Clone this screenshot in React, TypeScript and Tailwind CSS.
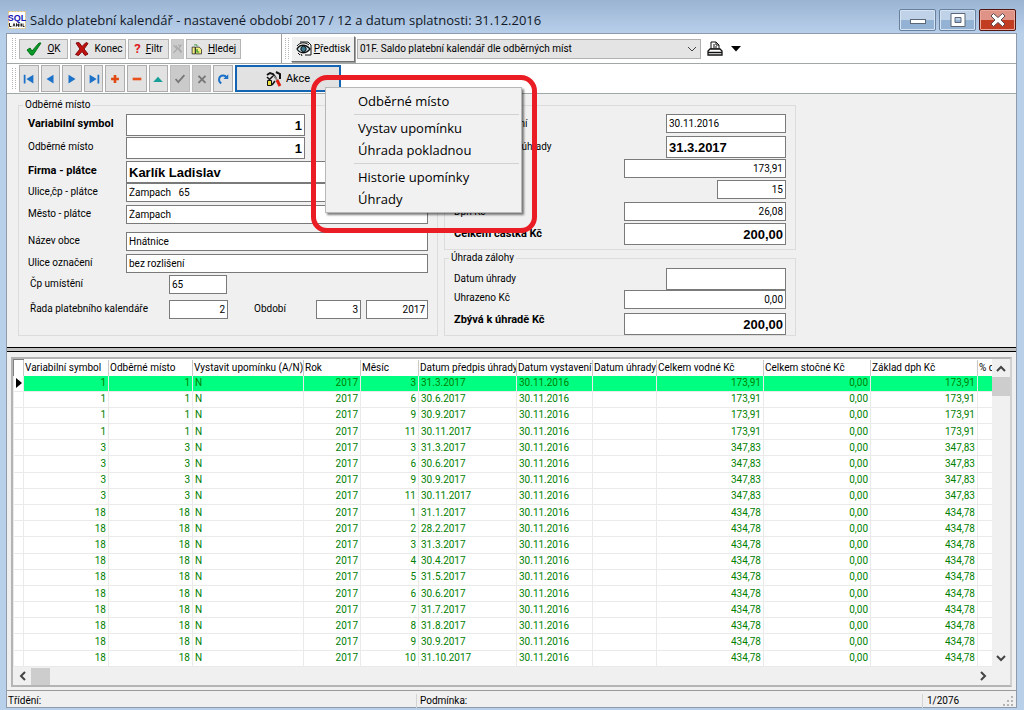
import { useState } from 'react';
import type { ReactNode } from 'react';
import clsx from 'clsx';

/**
 * Saldo platební kalendář
 * Detail form on top, payment schedule grid below
 */

interface Payment {
  id: number;
  month: number;
  due: string;
  amount: string;
}

const payments: Payment[] = [
  { id: 1, month: 3, due: '31.3.2017', amount: '173,91' },
  { id: 1, month: 6, due: '30.6.2017', amount: '173,91' },
  { id: 1, month: 9, due: '30.9.2017', amount: '173,91' },
  { id: 1, month: 11, due: '30.11.2017', amount: '173,91' },
  { id: 3, month: 3, due: '31.3.2017', amount: '347,83' },
  { id: 3, month: 6, due: '30.6.2017', amount: '347,83' },
  { id: 3, month: 9, due: '30.9.2017', amount: '347,83' },
  { id: 3, month: 11, due: '30.11.2017', amount: '347,83' },
  { id: 18, month: 1, due: '31.1.2017', amount: '434,78' },
  { id: 18, month: 2, due: '28.2.2017', amount: '434,78' },
  { id: 18, month: 3, due: '31.3.2017', amount: '434,78' },
  { id: 18, month: 4, due: '30.4.2017', amount: '434,78' },
  { id: 18, month: 5, due: '31.5.2017', amount: '434,78' },
  { id: 18, month: 6, due: '30.6.2017', amount: '434,78' },
  { id: 18, month: 7, due: '31.7.2017', amount: '434,78' },
  { id: 18, month: 8, due: '31.8.2017', amount: '434,78' },
  { id: 18, month: 9, due: '30.9.2017', amount: '434,78' },
  { id: 18, month: 10, due: '31.10.2017', amount: '434,78' },
];

const columns = [
  { label: 'Variabilní symbol', width: 'w-[85px]' },
  { label: 'Odběrné místo', width: 'w-[84px]' },
  { label: 'Vystavit upomínku (A/N)', width: 'w-[111px]' },
  { label: 'Rok', width: 'w-[57px]' },
  { label: 'Měsíc', width: 'w-[58px]' },
  { label: 'Datum předpis úhrady', width: 'w-[98px]' },
  { label: 'Datum vystavení', width: 'w-[76px]' },
  { label: 'Datum úhrady', width: 'w-[64px]' },
  { label: 'Celkem vodné Kč', width: 'w-[107px]' },
  { label: 'Celkem stočné Kč', width: 'w-[107px]' },
  { label: 'Základ dph Kč', width: 'w-[107px]' },
  { label: '% dph', width: '' },
];

function Icon({ size = 'size-4', children }: { size?: string; children: ReactNode }) {
  return (
    <svg viewBox="0 0 16 16" className={clsx(size, 'shrink-0')} fill="none" aria-hidden="true">
      {children}
    </svg>
  );
}

function Grip() {
  return <div className="my-1 w-1 shrink-0 self-stretch border-x border-dotted border-[#b4b4b4]" />;
}

function ToolButton({ width, disabled, label, children }: { width: string; disabled?: boolean; label?: string; children: ReactNode }) {
  return (
    <button
      disabled={disabled}
      aria-label={label}
      className={clsx(
        'flex h-5 items-center justify-center gap-[5px] border whitespace-nowrap',
        width,
        disabled ? 'border-[#c4c4c4] bg-[#cccccc]' : 'border-[#b4b4b4] bg-[#e4e4e4]',
      )}
    >
      {children}
    </button>
  );
}

const navButtons = [
  { label: 'První', icon: <path d="M2 3h2v10H2zM13 3v10L5 8z" fill="#1c72c8" /> },
  { label: 'Předchozí', icon: <path d="M12 3v10L4 8z" fill="#1c72c8" /> },
  { label: 'Další', icon: <path d="M4 3v10l8-5z" fill="#1c72c8" /> },
  { label: 'Poslední', icon: <path d="M3 3v10l8-5zM12 3h2v10h-2z" fill="#1c72c8" /> },
  { label: 'Přidat', icon: <path d="M6.500 3.500h3v3h3v3h-3v3h-3v-3h-3v-3h3z" fill="#e04a12" /> },
  { label: 'Odebrat', icon: <path d="M3 6.500h10v3H3z" fill="#e8501c" /> },
  { label: 'Upravit', icon: <path d="M2.500 11.500h11L8 5.500z" fill="#18a098" /> },
  { label: 'Uložit', off: true, icon: <path d="M3 8l3 3.500 7-8" stroke="#777" strokeWidth="2" /> },
  { label: 'Zrušit', off: true, icon: <path d="M4 4.500l8 8M12 4.500l-8 8" stroke="#777" strokeWidth="2.200" /> },
  { label: 'Obnovit', icon: <><path d="M6 13C1.500 10 3.500 4 8 4c2 0 3.500 1 4 3" stroke="#1c72c8" strokeWidth="2.200" /><path d="M8.500 8H14V2.500z" fill="#1c72c8" /></> },
];

interface BoxProps {
  id: string;
  value: string;
  width: string;
  right?: boolean;
  bigText?: boolean;
}

interface FieldProps extends BoxProps {
  label: string;
  labelWidth?: string;
  bold?: boolean;
  tall?: boolean;
  push?: boolean;
  className?: string;
  children?: ReactNode;
}

function Box({ id, value, width, right, bigText }: BoxProps) {
  return (
    <input
      id={id}
      type="text"
      defaultValue={value}
      className={clsx(
        'h-full border border-[#7a7a7a] bg-white px-[2px] outline-none',
        width,
        right && 'text-right',
        bigText && 'font-[Liberation_Sans] text-[13px] font-bold',
      )}
    />
  );
}

// One label + edit box line of the form
function Field({ label, labelWidth = 'w-[98px]', bold, tall, push, className, children, ...box }: FieldProps) {
  return (
    <div className={clsx('flex items-center', tall ? 'h-[22px]' : 'h-[19px]', className)}>
      <label htmlFor={box.id} className={clsx('shrink-0 whitespace-nowrap', !push && 'pb-[2px]', labelWidth, bold && 'text-[11px] font-bold')}>
        {label}
      </label>
      {push && <div className="flex-1" />}
      <Box {...box} />
      {children}
    </div>
  );
}

function ActionMenu() {
  const item = 'block h-[22px] w-full pl-8 text-left whitespace-nowrap';
  return (
    <div role="menu" className="absolute top-[22px] left-[90px] z-20 w-[197px] border border-[#b8b8b8] bg-[#f1f1f1] py-[2px] font-[Open_Sans] text-[13px] shadow-[2px_2px_2px_#00000080]">
      <button role="menuitem" className={item}>Odběrné místo</button>
      <hr className="my-[2px] mr-[2px] ml-7 border-[#d2d2d2]" />
      <button role="menuitem" className={item}>Vystav upomínku</button>
      <button role="menuitem" className={item}>Úhrada pokladnou</button>
      <hr className="my-[2px] mr-[2px] ml-7 border-[#d2d2d2]" />
      <button role="menuitem" className={item}>Historie upomínky</button>
      <button role="menuitem" className={item}>Úhrady</button>
    </div>
  );
}

function TitleBar() {
  return (
    <header className="flex h-[33px] shrink-0 items-center bg-linear-to-b from-[#9ab4d2] to-[#b8cfea] pt-[6px]">
      <svg viewBox="0 0 18 18" className="ml-2 size-[18px] shrink-0" aria-hidden="true">
        <rect x="0.500" y="0.500" width="17" height="17" fill="#fff" stroke="#e8c070" strokeDasharray="2 1" />
        <text x="9" y="9.500" textAnchor="middle" fontSize="9" fontWeight="bold" fontFamily="Liberation Sans" fill="#1414b4">SQL</text>
        <path d="M1.500 12v3.500h2M5 15.500l1-3 1 3M8.500 15.500v-3l2 3v-3M12 12.500v3M13.500 12.500v3M15 12.500v3h1.500" stroke="#222" fill="none" />
      </svg>
      <h1 className="ml-1 flex-1 font-[Open_Sans] text-[13px] whitespace-nowrap text-[#111827]">
        Saldo platební kalendář - nastavené období 2017 / 12 a datum splatnosti: 31.12.2016
      </h1>
      <div className="mr-2 flex gap-[3px]">
        <button aria-label="Minimalizovat" className="flex h-[22px] w-[37px] items-center justify-center rounded-xs border border-[#66809e] bg-linear-to-b from-[#bfd2e8] from-50% to-[#94b3d4] to-50% shadow-[inset_0_0_0_1px_#d5e3f2]">
          <svg viewBox="0 0 16 16" className="size-4"><rect x="0.500" y="7.500" width="15" height="4" fill="#fff" stroke="#5b6676" /></svg>
        </button>
        <button aria-label="Maximalizovat" className="flex h-[22px] w-[37px] items-center justify-center rounded-xs border border-[#66809e] bg-linear-to-b from-[#bfd2e8] from-50% to-[#94b3d4] to-50% shadow-[inset_0_0_0_1px_#d5e3f2]">
          <svg viewBox="0 0 16 16" className="size-4"><path d="M1 1.500h14v13H1zM5 5.500v5h6v-5z" fill="#fff" stroke="#5b6676" fillRule="evenodd" /></svg>
        </button>
        <button aria-label="Zavřít" className="flex h-[22px] w-[37px] items-center justify-center rounded-xs border border-[#521510] bg-linear-to-b from-[#df9386] from-50% to-[#c23c22] to-50% shadow-[inset_0_0_0_1px_#eaa99c]">
          <svg viewBox="0 0 16 16" className="size-4"><path d="M3.500 1.500L8 5.500l4.500-4 2.500 2.500L11 8l4 4-2.500 2.500L8 10.500l-4.500 4L1 12l4-4-4-4z" fill="#fff" stroke="#5c4a52" strokeLinejoin="round" /></svg>
        </button>
      </div>
    </header>
  );
}

export default function App() {
  const [selected, setSelected] = useState(0);

  return (
    <div className="flex h-screen flex-col bg-[#b9d0eb] font-[Roboto] text-[10px] leading-[14px] text-black">
      <TitleBar />

      <main className="mr-[7px] mb-[2px] ml-[6px] flex min-h-0 flex-1 flex-col border border-[#8f9bab] bg-[#f0f0f0]">
        {/* Toolbars */}
        <div className="flex h-[30px] shrink-0 items-center border-b border-[#a0a8a8] bg-white pl-[5px]">
          <Grip />
          <div className="ml-[3px] flex gap-[2px]">
            <ToolButton width="w-[49px]">
              <Icon><path d="M1 9l3-2 2 3 7-8 2 0L7 14H5z" fill="#0a9a28" stroke="#067018" /></Icon>
              <span><u>O</u>K</span>
            </ToolButton>
            <ToolButton width="w-[56px]">
              <Icon><path d="M2 2l3-.500 3 4L12 1.500l2 1L10 8l4 5-3 1.500L8 10.500 4.500 14.500l-3-1L6 8z" fill="#c01010" stroke="#800808" /></Icon>
              Konec
            </ToolButton>
            <ToolButton width="w-[41px]">
              <span className="text-[13px] font-bold text-[#e02020]">?</span>
              <span><u>F</u>iltr</span>
            </ToolButton>
            <ToolButton width="w-[13px]" disabled label="Zrušit filtr">
              <Icon size="size-3"><path d="M2 3l5 5-5 5M8 3h4l-3 4 4 5M5 3l7 10" stroke="#aaa" strokeWidth="1.500" /></Icon>
            </ToolButton>
            <ToolButton width="w-[55px]">
              <Icon size="size-3">
                <path d="M1.500 5.500h4v9h-4zM6 5.500h5l3 3v6H6z" fill="#f4f080" stroke="#222" />
                <path d="M8 8v4h3" stroke="#148a20" strokeWidth="1.500" />
                <path d="M4 2.500h4v2" stroke="#148a20" />
              </Icon>
              <span><u>H</u>ledej</span>
            </ToolButton>
          </div>
          <div className="ml-10 w-px self-stretch bg-[#a0a0a0]" />
          <div className="ml-[3px] flex self-stretch"><Grip /></div>
          <button className="ml-[2px] flex h-[26px] w-[64px] items-center justify-center gap-[2px] border border-t-white border-r-[#707070] border-b-[#707070] border-l-white bg-[#f0f0f0] whitespace-nowrap shadow-[1px_1px_0_#a0a0a0]">
            <Icon>
              <path d="M4 1h8l3 3v10H9" fill="#fff" stroke="#111" />
              <path d="M1 8c3-5 9-5 13 0-4 5-10 5-13 0z" fill="#cfe6f0" stroke="#111" strokeWidth="1.300" />
              <circle cx="7.500" cy="8" r="2.700" fill="#3a7890" stroke="#111" />
              <path d="M1 5c3-4 8-4 12-1M2 12l2 2M5 13l1 2" stroke="#111" />
            </Icon>
            <span><u>P</u>ředtisk</span>
          </button>
          <div className="relative ml-[2px] w-[344px]">
            <select aria-label="Předtisk" className="h-5 w-full appearance-none border border-[#b0b0b0] bg-[#e4e4e4] px-[2px]">
              <option>01F. Saldo platební kalendář dle odběrných míst</option>
            </select>
            <svg viewBox="0 0 10 6" className="pointer-events-none absolute top-[7px] right-1 h-[6px] w-[10px]" fill="none"><path d="M1 1l4 4 4-4" stroke="#444" /></svg>
          </div>
          <button aria-label="Tisk" className="ml-[6px] flex items-center gap-2">
            <Icon>
              <path d="M4 8V1h5l3 3v4z" fill="#fff" stroke="#111" />
              <path d="M6 4h2M6 6h4M9 1v3h3" stroke="#111" />
              <path d="M3 8h10l2 2v4H1v-4z" fill="#fff" stroke="#111" strokeWidth="1.300" />
              <path d="M1 11.500h14" stroke="#111" strokeWidth="1.500" />
            </Icon>
            <svg viewBox="0 0 10 6" className="h-[6px] w-[10px]"><path d="M0 0h10L5 5.500z" fill="#000" /></svg>
          </button>
        </div>

        <div className="flex h-[30px] shrink-0 items-center border-b border-[#a0a8a8] bg-white pl-[5px]">
          <Grip />
          <div className="ml-[3px] grid w-[214px] grid-cols-10 gap-[2px]">
            {navButtons.map((b) => (
              <button
                key={b.label}
                aria-label={b.label}
                disabled={b.off}
                className={clsx('flex h-[27px] items-center justify-center border', b.off ? 'border-[#bcbcbc] bg-[#cacaca]' : 'border-[#adadad] bg-[#e2e2e2]')}
              >
                <Icon size="size-[14px]">{b.icon}</Icon>
              </button>
            ))}
          </div>
          <div className="relative ml-[2px]">
            <button className="flex h-[27px] w-[106px] items-center justify-center gap-1 border-2 border-[#1464b4] bg-[#e2e2e2] text-[11px]">
              <Icon>
                <path d="M1 4l3-2 3 1 3 4" stroke="#111" strokeWidth="2" />
                <path d="M3 9l4-4M1 6l2 2" stroke="#111" strokeWidth="1.500" />
                <path d="M1.500 9.500h4v5h-4z" fill="#e8e040" stroke="#111" />
                <path d="M6 14l3-4" stroke="#111" strokeWidth="1.500" />
                <path d="M10 1l4 2v5" stroke="#111" strokeWidth="2" />
                <path d="M8 5l4 5" stroke="#888" strokeWidth="2" />
                <path d="M11 9l3 6" stroke="#e02010" strokeWidth="3" />
              </Icon>
              Akce
            </button>
            <ActionMenu />
            <div className="pointer-events-none absolute top-[10px] left-[76px] z-30 h-[158px] w-[226px] rounded-[16px] border-[5px] border-[#ea1c24]" />
          </div>
        </div>

        {/* Detail form */}
        <div className="flex shrink-0 items-stretch gap-[6px] pt-1 pb-[11px] pl-[11px]">
          <fieldset className="w-[420px] shrink-0 border border-[#dcdcdc] pb-4 pl-[9px]">
            <legend className="-ml-[5px] px-[2px]">Odběrné místo</legend>
            <Field id="vs" label="Variabilní symbol" value="1" width="w-[179px]" bold tall right bigText className="mt-[2px]" />
            <Field id="om" label="Odběrné místo" value="1" width="w-[179px]" tall right bigText className="mt-px" />
            <Field id="firma" label="Firma - plátce" value="Karlík Ladislav" width="w-[302px]" bold tall bigText className="mt-[2px]" />
            <Field id="ulice" label="Ulice,čp - plátce" value="Žampach   65" width="w-[302px]" />
            <Field id="mesto" label="Město - plátce" value="Žampach" width="w-[302px]" className="mt-[3px]" />
            <Field id="obec" label="Název obce" value="Hnátnice" width="w-[302px]" className="mt-2" />
            <Field id="oznaceni" label="Ulice označení" value="bez rozlišení" width="w-[302px]" className="mt-[3px]" />
            <Field id="cp" label="Čp umístění" value="65" width="w-[58px]" labelWidth="w-[141px] pl-[2px]" className="mt-[2px]" />
            <Field id="rada" label="Řada platebního kalendáře" value="2" width="w-[59px]" labelWidth="w-[141px] pl-[2px]" right className="mt-[6px]">
              <label htmlFor="obdobi" className="ml-[26px] w-[62px] pb-[2px]">Období</label>
              <Box id="obdobi" value="3" width="w-[45px]" right />
              <div className="w-[5px]" />
              <input id="rok" aria-label="Rok" type="text" defaultValue="2017" className="h-full w-[62px] border border-[#7a7a7a] bg-white px-[2px] text-right" />
            </Field>
          </fieldset>

          <div className="flex w-[352px] shrink-0 flex-col">
            <fieldset className="border border-[#dcdcdc] pr-[9px] pb-1 pl-[9px]">
              <legend className="-ml-[5px] px-[2px]">Předpis zálohy</legend>
              <Field id="dv" label="Datum vystavení" value="30.11.2016" width="w-[120px]" push className="mt-[2px]" />
              <Field id="dp" label="Datum předpis úhrady" value="31.3.2017" width="w-[120px]" push tall bigText className="mt-[3px]" />
              <Field id="zaklad" label="Základ dph Kč" value="173,91" width="w-[162px]" push right className="mt-px" />
              <Field id="sazba" label="% dph" value="15" width="w-[69px]" push right className="mt-[2px]" />
              <Field id="dph" label="Dph Kč" value="26,08" width="w-[162px]" push right className="mt-[3px]" />
              <Field id="celkem" label="Celkem částka Kč" value="200,00" width="w-[162px]" bold push tall right bigText className="mt-[2px]" />
            </fieldset>
            <fieldset className="mt-px flex-1 border border-[#dcdcdc] pr-[9px] pl-[9px]">
              <legend className="-ml-[5px] px-[2px]">Úhrada zálohy</legend>
              <Field id="du" label="Datum úhrady" value="" width="w-[120px]" push tall className="mt-[3px]" />
              <Field id="uhrazeno" label="Uhrazeno Kč" value="0,00" width="w-[162px]" labelWidth="w-[98px] pb-1" push right />
              <Field id="zbyva" label="Zbývá k úhradě Kč" value="200,00" width="w-[162px]" labelWidth="w-[98px] pb-2" bold push tall right bigText className="mt-1" />
            </fieldset>
          </div>
        </div>

        {/* Splitter */}
        <div className="h-[5px] shrink-0 border-y border-black bg-[#c0c0c0]" />

        {/* Payments grid */}
        <div className="mx-1 mt-[5px] mb-[3px] flex min-h-0 flex-1 flex-col border-2 border-[#b4b4b4] border-r-[#d0d0d0] bg-white">
          <div className="flex min-h-0 flex-1">
            <div className="min-w-0 flex-1 overflow-hidden">
              <table className="h-full w-full table-fixed border-collapse">
                <thead>
                  <tr className="h-4">
                    <th className="w-[10px] border-t border-l border-[#808080] p-0" />
                    {columns.map((c) => (
                      <th key={c.label} className={clsx('overflow-hidden border-l border-[#c8c8c8] p-0 pl-px text-left font-normal whitespace-nowrap', c.width)}>
                        {c.label}
                      </th>
                    ))}
                  </tr>
                </thead>
                <tbody className="text-[#008000]">
                  {payments.map((p, i) => (
                    <tr
                      key={i}
                      onClick={() => setSelected(i)}
                      className="border-b border-[#eaeaea] [&>td]:border-l [&>td]:border-[#eaeaea] [&>td]:p-0 [&>td]:pr-[2px] [&>td]:pl-[2px] [&>td]:leading-[14px]"
                    >
                      <td className="bg-white">
                        {i === selected && (
                          <svg viewBox="0 0 6 10" className="h-[10px] w-[6px]"><path d="M0 0v10l6-5z" fill="#000" /></svg>
                        )}
                      </td>
                      {[p.id, p.id, 'N', 2017, p.month, p.due, '30.11.2016', '', p.amount, '0,00', p.amount, ''].map((v, c) => (
                        <td
                          key={c}
                          className={clsx([0, 1, 3, 4, 8, 9, 10].includes(c) && 'text-right', i === selected && 'bg-[#00ff80]')}
                        >
                          {v}
                        </td>
                      ))}
                    </tr>
                  ))}
                </tbody>
              </table>
            </div>
            <div className="flex w-[18px] shrink-0 flex-col items-center bg-[#f0f0f0]">
              <button aria-label="Nahoru" className="flex h-[18px] w-full items-center justify-center">
                <svg viewBox="0 0 10 7" className="h-[7px] w-[10px]" fill="none"><path d="M1 6l4-4 4 4" stroke="#444" strokeWidth="2" /></svg>
              </button>
              <div className="h-[19px] w-full bg-[#cdcdcd]" />
              <div className="flex-1" />
              <button aria-label="Dolů" className="flex h-[18px] w-full items-center justify-center">
                <svg viewBox="0 0 10 7" className="h-[7px] w-[10px]" fill="none"><path d="M1 1l4 4 4-4" stroke="#444" strokeWidth="2" /></svg>
              </button>
            </div>
          </div>
          <div className="flex h-[18px] shrink-0 items-center bg-[#f0f0f0]">
            <button aria-label="Vlevo" className="flex h-full w-[18px] items-center justify-center">
              <svg viewBox="0 0 7 10" className="h-[10px] w-[7px]" fill="none"><path d="M6 1L2 5l4 4" stroke="#444" strokeWidth="2" /></svg>
            </button>
            <div className="h-[17px] w-[19px] bg-[#cdcdcd]" />
            <div className="flex-1" />
            <button aria-label="Vpravo" className="mr-[18px] flex h-full w-[18px] items-center justify-center">
              <svg viewBox="0 0 7 10" className="h-[10px] w-[7px]" fill="none"><path d="M1 1l4 4-4 4" stroke="#444" strokeWidth="2" /></svg>
            </button>
          </div>
        </div>

        {/* Status bar */}
        <footer className="flex h-[17px] shrink-0 items-center border-t border-[#9a9a9a] pt-[4px]">
          <div className="w-[409px] shrink-0 pl-px">Třídění:</div>
          <div className="flex-1 border-l border-[#d4d4d4] pl-[3px]">Podmínka:</div>
          <div className="w-[80px] border-l border-[#d4d4d4] pl-1">1/2076</div>
          <svg viewBox="0 0 12 12" className="mr-[2px] size-3" fill="#b4b4b4" aria-hidden="true">
            <path d="M9 1h2v2H9zM9 5h2v2H9zM5 5h2v2H5zM9 9h2v2H9zM5 9h2v2H5zM1 9h2v2H1z" />
          </svg>
        </footer>
      </main>
    </div>
  );
}
